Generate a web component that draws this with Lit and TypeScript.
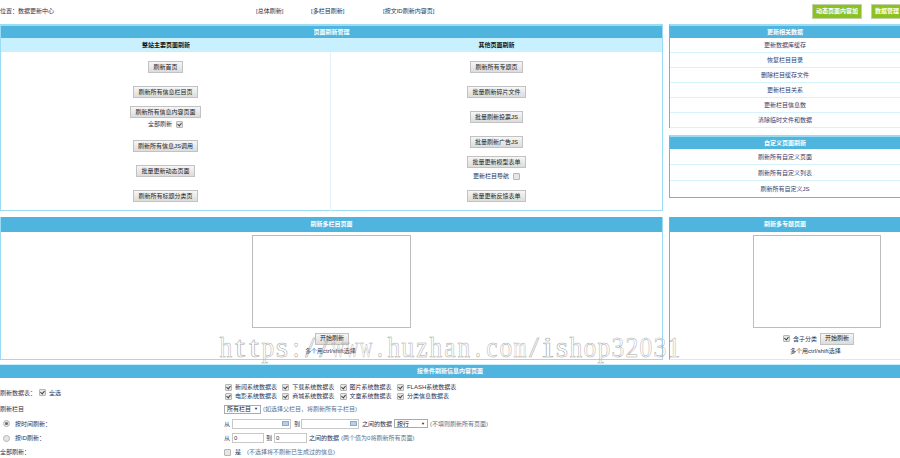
import { LitElement, html, css } from "lit";
import { customElement } from "lit/decorators.js";

const WM = "https://www.huzhan.com/ishop32031";
const GLYPH_SCALE: Record<string, number> = { m: 0.58, w: 0.62, s: 1.1, t: 1.25, i: 1.4, "/": 1.2 };
const LEFT = ["刷新首页", "刷新所有信息栏目页", "刷新所有信息内容页面", "", "刷新所有信息JS调用", "批量更新动态页面", "刷新所有标题分类页"];
const RIGHT = ["刷新所有专题页", "批量刷新碎片文件", "批量刷新投票JS", "批量刷新广告JS", "批量更新模型表单", "", "批量更新反馈表单"];
const OPS = ["更新数据库缓存", "恢复栏目目录", "删除栏目缓存文件", "更新栏目关系", "更新栏目信息数", "清除临时文件和数据"];
const CUSTOM = ["刷新所有自定义页面", "刷新所有自定义列表", "刷新所有自定义JS"];
const TABLES = ["新闻系统数据表", "下载系统数据表", "图片系统数据表", "FLASH系统数据表", "电影系统数据表", "商城系统数据表", "文章系统数据表", "分类信息数据表"];

@customElement("app-root")
export class AppRoot extends LitElement {
  static styles = css`
    :host { display: block; position: relative; width: 900px; height: 458px; overflow: hidden; background: #fff;
      font: 6px/8px "Liberation Sans", "Noto Sans CJK SC", sans-serif; color: #2b3350; }
    * { box-sizing: border-box; }
    .top { height: 24px; display: grid; grid-template-columns: 256px 55px 72px 1fr auto; align-items: center; padding-bottom: 2px; }
    .green { display: flex; gap: 9px; margin-right: -3px; }
    .green span { height: 15px; padding: 0 3px; background: #8cc21e; border: 1px solid #c3cfae; color: #fff; font-weight: 700; display: flex; align-items: center; }
    .row { display: grid; grid-template-columns: 663px 231px; column-gap: 6px; }
    .panel { border: 1px solid #9adcf4; border-top-width: 2px; }
    .head { height: 12px; background: #4fb4de; color: #fff; font-weight: 700; text-align: center; line-height: 12px; }
    .sub { display: grid; grid-template-columns: 330px 1fr; height: 14px; background: #c8f0ff; color: #111; font-weight: 700; text-align: center; line-height: 14px; }
    .cols { display: grid; grid-template-columns: 330px 1fr; height: 158px; }
    .col { display: grid; justify-items: center; align-items: start; padding-top: 9px; }
    .col.l { border-right: 1px solid #e3f0fa; grid-template-rows: 25px 20px 14px 20px 25px 25px 21px; }
    .col.r { grid-template-rows: 25px 25px 25px 20px 16px 18px 21px; }
    button { font: inherit; color: #222; height: 12px; padding: 0 4px; line-height: 9px; border: 1px solid #c2c2c2;
      background: linear-gradient(#f6f6f6, #dcdcdc); border-radius: 0; }
    .inl { display: flex; align-items: center; gap: 4px; }
    input { appearance: none; -webkit-appearance: none; position: relative; width: 7px; height: 7px; margin: 0; flex: none;
      border: 1px solid #b5b5b5; background: #e6e6e6; border-radius: 1px; }
    input[type="checkbox"]:checked::after { content: ""; position: absolute; left: 1px; top: 0; width: 2px; height: 3px;
      border: solid #444; border-width: 0 1px 1px 0; transform: rotate(40deg); }
    input[type="radio"] { border-radius: 50%; }
    input[type="radio"]:checked::after { content: ""; position: absolute; left: 1px; top: 1px; width: 3px; height: 3px; border-radius: 50%; background: #666; }
    .side { display: flex; flex-direction: column; gap: 7px; }
    .side .panel { border-color: #6db5e0; border-top-color: #9adcf4; border-right: none; }
    .ops { display: grid; }
    .ops div { text-align: center; color: #33406e; border-bottom: 1px solid #d6f2fd; }
    .ops.a div { height: 15px; line-height: 15px; }
    .ops.b div { height: 16px; line-height: 17px; }
    .ops.b div:last-child { border-bottom: none; }
    .side .first { height: 104px; }
    .side .second { border-bottom-width: 1px; height: 63px; }
    .lists { margin-top: 6px; }
    .lists .panel { height: 143px; border-top: none; }
    .lists .head { height: 15px; line-height: 15px; }
    .lists .panel.right { border-left-color: #6db5e0; border-right: none; border-bottom-color: #c8f0ff; }
    .pick { position: relative; display: flex; flex-direction: column; height: 126px; padding-top: 3px; }
    .l1 { padding-left: 251px; }
    .r1 { padding-left: 83px; }
    .box { height: 93px; background: #fff; border: 1px solid #bdbdbd; flex: none; }
    .l1 .box { width: 159px; }
    .r1 .box { width: 128px; }
    .act { display: flex; align-items: center; gap: 3px; margin-top: 4px; height: 13px; }
    .l1 .act { margin-left: 63px; }
    .r1 .act { margin-left: 30px; }
    .hint { margin-top: 2px; }
    .l1 .hint { margin-left: 53px; }
    .r1 .hint { margin-left: 37px; }
    .cond { margin-top: 4px; border-top: 1px solid #c8f0ff; }
    .cond .head { height: 13px; line-height: 13px; }
    .form { display: grid; grid-template-columns: 224px 1fr; padding-top: 5px; }
    .line { display: flex; align-items: center; }
    .tbls { display: grid; grid-template-columns: repeat(4, 57.3px); row-gap: 1px; padding-left: 1px; align-self: start; }
    .tbls label { display: flex; align-items: center; gap: 3px; white-space: nowrap; height: 8px; }
    .h1 { height: 19px; gap: 3px; }
    .h2 { height: 14px; }
    .h3 { height: 15px; }
    .lab { gap: 5px; padding-left: 3px; }
    .mut { color: #59708c; margin-left: 2px; }
    .sel { height: 9px; border: 1px solid #aaa; display: inline-flex; align-items: center; justify-content: space-between; padding: 0 2px; gap: 3px; background: #fff; color: #222; }
    .sel i { font-style: normal; font-size: 4px; }
    .sel.w { width: 34px; margin-left: 2px; }
    .ip { height: 10px; border: 1px solid #c8c8c8; background: #fff; padding-left: 1px; line-height: 8px; display: flex; align-items: center; color: #345; }
    .ip.d1 { width: 59px; margin: 0 3px 0 2px; }
    .ip.d2 { width: 58px; margin: 0 3px 0 1px; }
    .ip.n1 { width: 32px; margin: 0 2px 0 2px; }
    .ip.n2 { width: 33px; margin: 0 2px 0 2px; }
    .ip b { width: 7px; height: 5px; margin: 0 1px 0 auto; background: #b9cde6; border: 1px solid #8fa9cc; }
    .wm { position: absolute; left: 219px; top: 332px; display: flex; pointer-events: none; }
    .wm span { width: 14px; height: 30px; display: flex; justify-content: center;
      font: 29px/30px "Liberation Serif", serif; color: transparent; -webkit-text-stroke: 0.5px #a8a8a8; white-space: pre; }
  `;

  private col(items: string[], extra: unknown) {
    return items.map((t) => (t ? html`<button>${t}</button>` : extra));
  }

  render() {
    return html`
      <div class="top">
        <span>位置：数据更新中心</span>
        <span>[总体刷新]</span>
        <span>[多栏目刷新]</span>
        <span>[按文ID刷新内容页]</span>
        <div class="green"><span>动态页面内容加</span><span>数据管理</span></div>
      </div>

      <div class="row">
        <section class="panel">
          <div class="head">页面刷新管理</div>
          <div class="sub"><span>整站主要页面刷新</span><span>其他页面刷新</span></div>
          <div class="cols">
            <div class="col l">${this.col(LEFT, html`<label class="inl">全部刷新 <input type="checkbox" checked /></label>`)}</div>
            <div class="col r">${this.col(RIGHT, html`<label class="inl">更新栏目导航 <input type="checkbox" /></label>`)}</div>
          </div>
        </section>
        <aside class="side">
          <section class="panel first">
            <div class="head">更新相关数据</div>
            <div class="ops a">${OPS.map((t) => html`<div>${t}</div>`)}</div>
          </section>
          <section class="panel second">
            <div class="head">自定义页面刷新</div>
            <div class="ops b">${CUSTOM.map((t) => html`<div>${t}</div>`)}</div>
          </section>
        </aside>
      </div>

      <div class="row lists">
        <section class="panel">
          <div class="head">刷新多栏目页面</div>
          <div class="pick l1">
            <div class="box"></div>
            <div class="act"><button>开始刷新</button></div>
            <div class="hint">多个用ctrl/shift选择</div>
          </div>
        </section>
        <section class="panel right">
          <div class="head">刷新多专题页面</div>
          <div class="pick r1">
            <div class="box"></div>
            <div class="act"><input type="checkbox" checked /><span>含子分类</span><button>开始刷新</button></div>
            <div class="hint">多个用ctrl/shift选择</div>
          </div>
        </section>
      </div>

      <section class="cond">
        <div class="head">按条件刷新信息内容页面</div>
        <div class="form">
          <div class="line h1">刷新数据表： <input type="checkbox" checked /> 全选</div>
          <div class="tbls">
            ${TABLES.map((t) => html`<label><input type="checkbox" checked />${t}</label>`)}
          </div>
          <div class="line h2">刷新栏目</div>
          <div class="line h2"><span class="sel">所有栏目 <i>▼</i></span><span class="mut">(如选择父栏目，将刷新所有子栏目)</span></div>
          <div class="line h3 lab"><input type="radio" checked />按时间刷新：</div>
          <div class="line h3">从<span class="ip d1"><b></b></span>到<span class="ip d2"><b></b></span>之间的数据<span class="sel w">按行 <i>▼</i></span><span class="mut">(不填则刷新所有页面)</span></div>
          <div class="line h2 lab"><input type="radio" />按ID刷新：</div>
          <div class="line h2">从<span class="ip n1">0</span>到<span class="ip n2">0</span>之间的数据<span class="mut">(两个值为0将刷新所有页面)</span></div>
          <div class="line h2">全部刷新：</div>
          <div class="line h2 inl"><input type="checkbox" />是<span class="mut">(不选择将不刷新已生成过的信息)</span></div>
        </div>
      </section>

      <div class="wm" aria-hidden="true">${[...WM].map((c) => html`<span style="transform: scaleX(${GLYPH_SCALE[c] ?? 0.88})">${c}</span>`)}</div>
    `;
  }
}
